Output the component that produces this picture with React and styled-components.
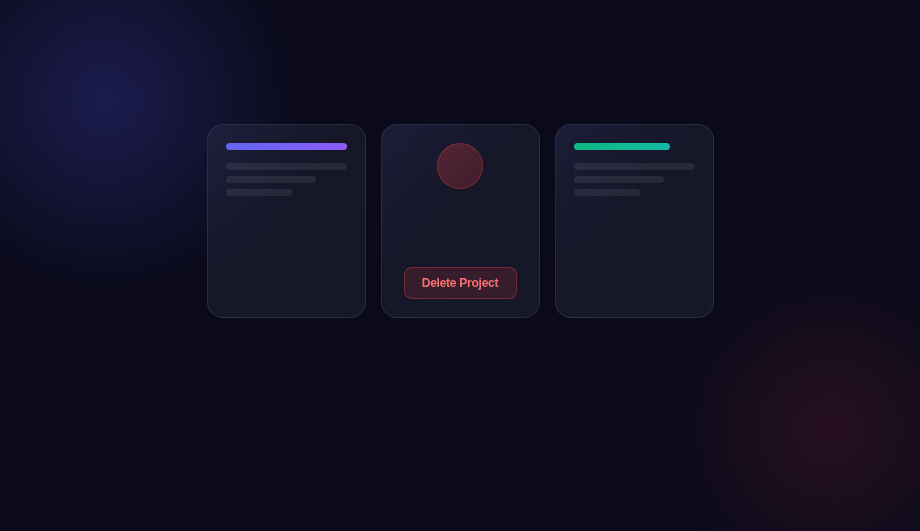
import React from "react";
import styled, { createGlobalStyle } from "styled-components";

const GlobalStyle = createGlobalStyle`
  html, body {
    margin: 0;
    padding: 0;
    background: #0a0a1a;
  }
  body {
    font-family: "Liberation Sans", Arial, sans-serif;
  }
`;

const Page = styled.div`
  position: relative;
  width: 100%;
  height: 100vh;
  overflow: hidden;
  background: #0a0a1a;
  display: flex;
  justify-content: center;
  align-items: flex-start;
  padding-top: 124px;
  box-sizing: border-box;
`;

const Glow = styled.div`
  position: absolute;
  width: ${(p) => p.$size}px;
  height: ${(p) => p.$size}px;
  left: ${(p) => p.$x - p.$size / 2}px;
  top: ${(p) => p.$y - p.$size / 2}px;
  border-radius: 50%;
  background: radial-gradient(circle, ${(p) => p.$color} 0%, transparent 70%);
  pointer-events: none;
`;

const Row = styled.div`
  position: relative;
  display: flex;
  gap: 15px;
`;

const Card = styled.div`
  width: 159px;
  height: 194px;
  box-sizing: border-box;
  padding: 18px;
  border-radius: 16px;
  border: 1px solid rgba(255, 255, 255, 0.09);
  background: linear-gradient(
    135deg,
    rgba(34, 36, 66, 0.75) 0%,
    rgba(24, 26, 44, 0.85) 40%,
    rgba(25, 26, 44, 0.85) 100%
  );
  backdrop-filter: blur(12px);
  display: flex;
  flex-direction: column;
  align-items: ${(p) => (p.$center ? "center" : "stretch")};
  justify-content: ${(p) => (p.$center ? "space-between" : "flex-start")};
`;

const Bar = styled.div`
  height: 7px;
  width: ${(p) => p.$width};
  border-radius: 4px;
  background: ${(p) => p.$gradient};
  margin-bottom: 13px;
`;

const Lines = styled.div`
  display: flex;
  flex-direction: column;
  gap: 6px;
`;

const Line = styled.div`
  height: 7px;
  width: ${(p) => p.$width};
  border-radius: 4px;
  background: rgba(255, 255, 255, 0.08);
`;

const Avatar = styled.div`
  width: 46px;
  height: 46px;
  box-sizing: border-box;
  border-radius: 50%;
  background: linear-gradient(135deg, rgba(239, 68, 68, 0.28), rgba(220, 50, 60, 0.22));
  border: 1px solid rgba(239, 68, 68, 0.32);
`;

const DeleteButton = styled.button`
  width: 113px;
  height: 32px;
  box-sizing: border-box;
  border-radius: 8px;
  border: 1px solid rgba(239, 68, 68, 0.35);
  background: rgba(239, 68, 68, 0.15);
  color: #f87171;
  font-family: "Liberation Sans", Arial, sans-serif;
  font-weight: 700;
  font-size: 12px;
  letter-spacing: -0.25px;
  cursor: pointer;
  padding: 0;
`;

function SkeletonCard({ gradient, barWidth }) {
  return (
    <Card>
      <Bar $gradient={gradient} $width={barWidth} />
      <Lines>
        <Line $width="100%" />
        <Line $width="75%" />
        <Line $width="55%" />
      </Lines>
    </Card>
  );
}

export default function App() {
  return (
    <>
      <GlobalStyle />
      <Page>
        <Glow $x={105} $y={100} $size={400} $color="rgba(45, 45, 130, 0.5)" />
        <Glow $x={830} $y={430} $size={340} $color="rgba(100, 28, 42, 0.32)" />
        <Row>
          <SkeletonCard gradient="linear-gradient(90deg, #6366f1, #8b5cf6)" barWidth="100%" />
          <Card $center>
            <Avatar />
            <DeleteButton>Delete Project</DeleteButton>
          </Card>
          <SkeletonCard gradient="linear-gradient(90deg, #10b981, #14b8a6)" barWidth="80%" />
        </Row>
      </Page>
    </>
  );
}
